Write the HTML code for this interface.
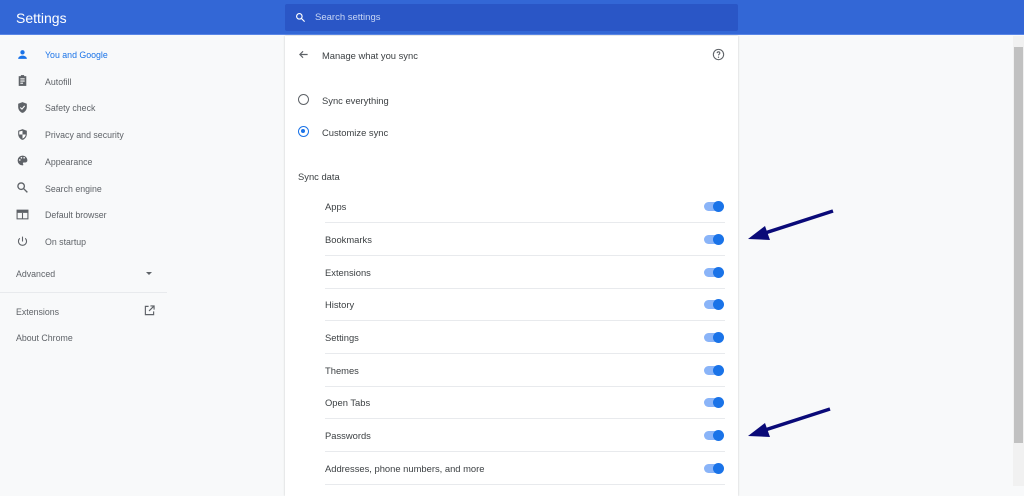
<!DOCTYPE html>
<html><head><style>
*{margin:0;padding:0;box-sizing:border-box}
body{width:1024px;height:486px;overflow:hidden;background:#f8f9fa;font-family:"Liberation Sans",sans-serif;position:relative;color:#3c4043}
.hdr{position:absolute;left:0;top:0;width:1024px;height:35px;background:#3367d6;border-bottom:1px solid #5a86e6}
.hdr .t{position:absolute;left:16px;top:10px;color:#fff;font-size:14px}
.search{position:absolute;left:285px;top:4px;width:453px;height:27px;background:#2a56c6;border-radius:2px}
.search span{position:absolute;left:30px;top:8px;color:#c9d7f5;font-size:9.5px}
.nav{position:absolute;left:45px;font-size:8.8px;color:#5f6368}
.ico{position:absolute;left:16px}
.card{position:absolute;left:285px;top:36px;width:453px;height:460px;background:#fff;box-shadow:0 0 2px rgba(0,0,0,.2)}
.tx{position:absolute;font-size:9.4px;color:#3c4043}
.row{position:absolute;left:40px;width:400px;height:33px;border-bottom:1px solid #e8eaed}
.row span{position:absolute;left:0;top:11px;font-size:9.4px;color:#3c4043}
.tg{position:absolute;right:2px;top:12px;width:19px;height:9px;border-radius:5px;background:#8ab4f8}
.tg:after{content:"";position:absolute;right:-1px;top:-1px;width:11px;height:11px;border-radius:50%;background:#1a73e8}
.sb{position:absolute;left:1013px;top:36px;width:11px;height:450px;background:#f1f1f1}
.sb div{position:absolute;left:1px;top:11px;width:9px;height:396px;background:#c1c1c1}
</style></head><body>
<div class="hdr"><div class="t">Settings</div>
<div class="search"><svg style="position:absolute;left:10px;top:8px" width="11" height="11" viewBox="0 0 24 24"><circle cx="9.5" cy="9.5" r="6" fill="none" stroke="#fff" stroke-width="2.5"/><path d="M14 14l7 7" stroke="#fff" stroke-width="2.5"/></svg><span>Search settings</span></div></div>

<svg class="ico" style="top:48px" width="13" height="13" viewBox="0 0 24 24"><circle cx="12" cy="8" r="4" fill="#1a73e8"/><path d="M4 20c0-4 4-6 8-6s8 2 8 6z" fill="#1a73e8"/></svg>
<div class="nav" style="top:50px;color:#1a73e8">You and Google</div>
<svg class="ico" style="top:74px" width="13" height="13" viewBox="0 0 24 24"><path d="M5 4h14v18H5z" fill="#5f6368"/><rect x="8" y="8" width="8" height="2" fill="#fff"/><rect x="8" y="12" width="8" height="2" fill="#fff"/><rect x="8" y="16" width="5" height="2" fill="#fff"/><rect x="9" y="2" width="6" height="3" fill="#5f6368"/></svg>
<div class="nav" style="top:77px">Autofill</div>
<svg class="ico" style="top:101px" width="13" height="13" viewBox="0 0 24 24"><path d="M12 2l8 3v6c0 5-3.5 9.5-8 11-4.5-1.5-8-6-8-11V5z" fill="#5f6368"/><path d="M8 12l3 3 5-6" stroke="#fff" stroke-width="2" fill="none"/></svg>
<div class="nav" style="top:103px">Safety check</div>
<svg class="ico" style="top:128px" width="13" height="13" viewBox="0 0 24 24"><path d="M12 2l8 3v6c0 5-3.5 9.5-8 11-4.5-1.5-8-6-8-11V5z" fill="#5f6368"/><path d="M12 5v7h6c-.5 3.5-3 6.5-6 7.5V12H6V6.5z" fill="#fff"/></svg>
<div class="nav" style="top:130px">Privacy and security</div>
<svg class="ico" style="top:154px" width="13" height="13" viewBox="0 0 24 24"><path d="M12 3a9 9 0 000 18c1 0 1.5-.7 1.5-1.5 0-1-.8-1.3-.8-2.2 0-1 .8-1.5 1.8-1.5H17a4 4 0 004-4c0-5-4-8.8-9-8.8z" fill="#5f6368"/><circle cx="7" cy="11" r="1.5" fill="#fff"/><circle cx="10" cy="7" r="1.5" fill="#fff"/><circle cx="15" cy="7" r="1.5" fill="#fff"/></svg>
<div class="nav" style="top:157px">Appearance</div>
<svg class="ico" style="top:181px" width="13" height="13" viewBox="0 0 24 24"><circle cx="9.5" cy="9.5" r="6" fill="none" stroke="#5f6368" stroke-width="2.5"/><path d="M14 14l7 7" stroke="#5f6368" stroke-width="2.5"/></svg>
<div class="nav" style="top:184px">Search engine</div>
<svg class="ico" style="top:208px" width="13" height="13" viewBox="0 0 24 24"><rect x="2" y="4" width="20" height="16" fill="none" stroke="#5f6368" stroke-width="2"/><rect x="2" y="4" width="20" height="5" fill="#5f6368"/><rect x="11" y="9" width="2" height="11" fill="#5f6368"/></svg>
<div class="nav" style="top:210px">Default browser</div>
<svg class="ico" style="top:235px" width="13" height="13" viewBox="0 0 24 24"><path d="M12 3v9" stroke="#5f6368" stroke-width="2"/><path d="M7 6a7.5 7.5 0 1010 0" fill="none" stroke="#5f6368" stroke-width="2"/></svg>
<div class="nav" style="top:237px">On startup</div>
<div class="nav" style="left:16px;top:269px">Advanced</div>
<div style="position:absolute;left:146px;top:272px;border:3px solid transparent;border-top:3px solid #5f6368"></div>
<div style="position:absolute;left:0;top:292px;width:167px;height:1px;background:#e8eaed"></div>
<div class="nav" style="left:16px;top:307px">Extensions</div>
<svg style="position:absolute;left:144px;top:305px" width="11" height="11" viewBox="0 0 24 24"><path d="M10 3H3v18h18v-7" fill="none" stroke="#5f6368" stroke-width="2.5"/><path d="M14 2h8v8M22 2L11 13" fill="none" stroke="#5f6368" stroke-width="2.5"/></svg>
<div class="nav" style="left:16px;top:333px">About Chrome</div>

<div class="card">
<svg style="position:absolute;left:13px;top:13px" width="11" height="11" viewBox="0 0 24 24"><path d="M21 12H4M11 5l-7 7 7 7" fill="none" stroke="#5f6368" stroke-width="2.5"/></svg>
<div class="tx" style="left:37px;top:14px">Manage what you sync</div>
<svg style="position:absolute;left:427px;top:12px" width="13" height="13" viewBox="0 0 24 24"><circle cx="12" cy="12" r="9.5" fill="none" stroke="#5f6368" stroke-width="2"/><path d="M9.5 9.5a2.5 2.5 0 115 0c0 2-2.5 2-2.5 4" fill="none" stroke="#5f6368" stroke-width="2"/><circle cx="12" cy="17" r="1.2" fill="#5f6368"/></svg>
<div style="position:absolute;left:13px;top:58px;width:11px;height:11px;border:1.8px solid #5f6368;border-radius:50%"></div>
<div class="tx" style="left:37px;top:59px">Sync everything</div>
<div style="position:absolute;left:13px;top:90px;width:11px;height:11px;border:1.8px solid #1a73e8;border-radius:50%"><div style="position:absolute;left:1.7px;top:1.7px;width:4px;height:4px;border-radius:50%;background:#1a73e8"></div></div>
<div class="tx" style="left:37px;top:91px">Customize sync</div>
<div class="tx" style="left:13px;top:135px">Sync data</div>
<div class="row" style="top:154px"><span>Apps</span><div class="tg"></div></div>
<div class="row" style="top:187px"><span>Bookmarks</span><div class="tg"></div></div>
<div class="row" style="top:220px"><span>Extensions</span><div class="tg"></div></div>
<div class="row" style="top:252px"><span>History</span><div class="tg"></div></div>
<div class="row" style="top:285px"><span>Settings</span><div class="tg"></div></div>
<div class="row" style="top:318px"><span>Themes</span><div class="tg"></div></div>
<div class="row" style="top:350px"><span>Open Tabs</span><div class="tg"></div></div>
<div class="row" style="top:383px"><span>Passwords</span><div class="tg"></div></div>
<div class="row" style="top:416px"><span>Addresses, phone numbers, and more</span><div class="tg"></div></div>
</div>

<svg style="position:absolute;left:0;top:0" width="1024" height="486">
<path d="M833 211L762 234" stroke="#0a0a78" stroke-width="3.5"/><path d="M748 239L765 226L770 240z" fill="#0a0a78"/>
<path d="M830 409L762 431" stroke="#0a0a78" stroke-width="3.5"/><path d="M748 436L765 423L770 437z" fill="#0a0a78"/>
</svg>
<div class="sb"><div></div></div>
</body></html>
